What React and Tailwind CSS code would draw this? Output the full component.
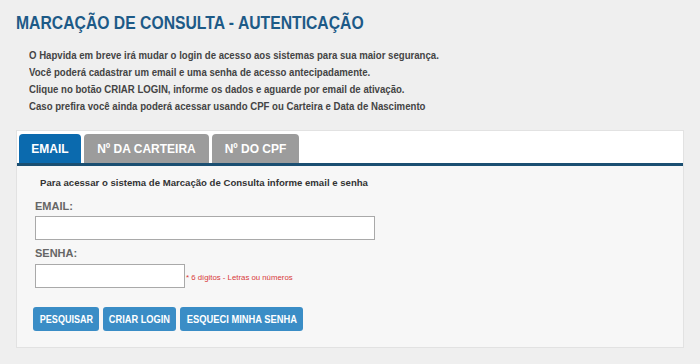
export default function App() {
  const arial = { fontFamily: '"Liberation Sans", Arial, sans-serif' };
  return (
    <div className="w-[700px] h-[364px] bg-[#efefef] overflow-hidden" style={arial}>
      <div className="pl-4 pr-4 pt-[13px]">
        <h1 className="text-[18.5px] leading-[20px] font-bold text-[#1d5a87] whitespace-nowrap origin-left scale-x-[0.85]">
          MARCAÇÃO DE CONSULTA - AUTENTICAÇÃO
        </h1>
        <div className="pl-[13px] pt-[14px]">
          <div className="text-[11px] leading-[17px] text-[#444] font-bold whitespace-nowrap origin-left scale-x-[0.874]">
            <p>O Hapvida em breve irá mudar o login de acesso aos sistemas para sua maior segurança.</p>
            <p>Você poderá cadastrar um email e uma senha de acesso antecipadamente.</p>
            <p>Clique no botão CRIAR LOGIN, informe os dados e aguarde por email de ativação.</p>
            <p>Caso prefira você ainda poderá acessar usando CPF ou Carteira e Data de Nascimento</p>
          </div>
        </div>
        <div className="mt-[15px] w-[668px] h-[218px] border border-[#e2e2e2] bg-[#f7f7f7] flex flex-col">
          <div className="bg-white pt-[3px] pl-[2px] flex gap-[3px] border-b-[3px] border-[#1b4f72] h-[35px]">
            <div className="w-[62px] h-full bg-[#0b6aae] rounded-t-[4px] flex items-center justify-center text-white font-bold text-[12px]">EMAIL</div>
            <div className="w-[125px] h-full bg-[#9c9c9c] rounded-t-[4px] flex items-center justify-center text-white font-bold text-[12px]">Nº DA CARTEIRA</div>
            <div className="w-[87px] h-full bg-[#9c9c9c] rounded-t-[4px] flex items-center justify-center text-white font-bold text-[12px]">Nº DO CPF</div>
          </div>
          <div className="pl-[16px] pt-[10px]">
            <p className="pl-[7px] text-[9.6px] leading-[14px] font-bold text-[#333]">
              Para acessar o sistema de Marcação de Consulta informe email e senha
            </p>
            <p className="ml-[2px] mt-[9px] text-[11px] leading-[14px] font-bold text-[#666]">EMAIL:</p>
            <div className="ml-[2px] mt-[3px] w-[340px] h-[24px] bg-white border border-[#a9a9a9]"></div>
            <p className="ml-[2px] mt-[6px] text-[11px] leading-[14px] font-bold text-[#666]">SENHA:</p>
            <div className="ml-[2px] mt-[4px] flex items-center">
              <div className="w-[150px] h-[24px] bg-white border border-[#a9a9a9]"></div>
              <span className="ml-[1px] mt-[4px] text-[7.8px] text-[#d83a3a]">* 6 dígitos - Letras ou números</span>
            </div>
            <div className="mt-[19px] flex gap-[4px]">
              <button className="h-[24px] w-[66px] bg-[#3a8dc6] rounded-[3px] text-white font-bold text-[11px] flex items-center justify-center">
                <span className="whitespace-nowrap scale-x-[0.82]">PESQUISAR</span>
              </button>
              <button className="h-[24px] w-[73px] bg-[#3a8dc6] rounded-[3px] text-white font-bold text-[11px] flex items-center justify-center">
                <span className="whitespace-nowrap scale-x-[0.84]">CRIAR LOGIN</span>
              </button>
              <button className="h-[24px] w-[123px] bg-[#3a8dc6] rounded-[3px] text-white font-bold text-[11px] flex items-center justify-center">
                <span className="whitespace-nowrap scale-x-[0.85]">ESQUECI MINHA SENHA</span>
              </button>
            </div>
          </div>
        </div>
      </div>
    </div>
  );
}
